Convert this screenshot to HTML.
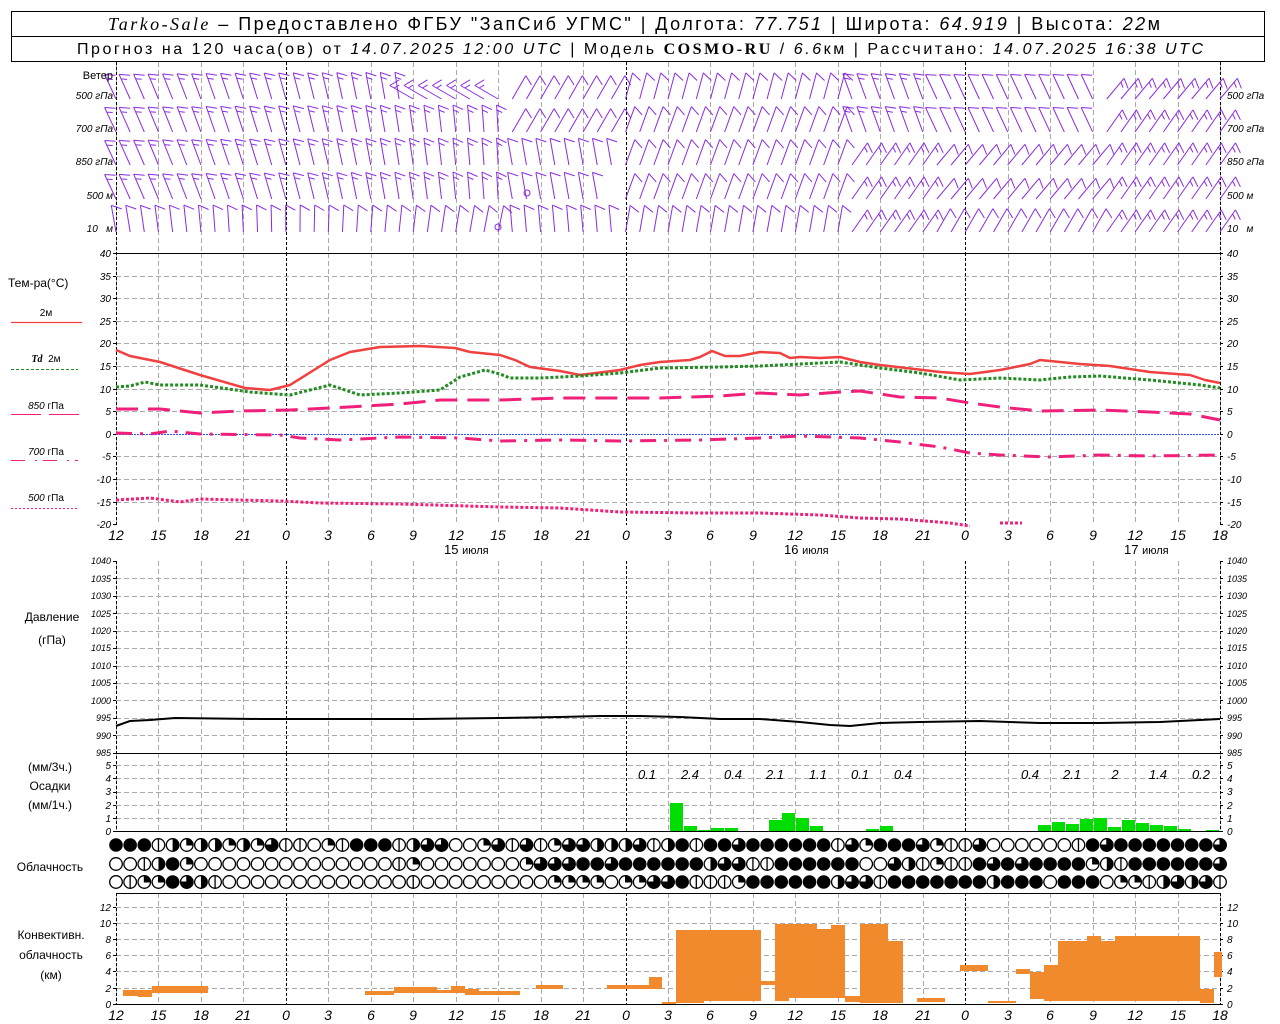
<!DOCTYPE html>
<html><head><meta charset="utf-8"><style>
html,body{margin:0;padding:0;background:#fff;width:1280px;height:1024px;overflow:hidden}
svg{display:block}
text{font-family:"Liberation Sans","DejaVu Sans",sans-serif;fill:#000}
.n{font-size:10px;font-style:italic}
.t{font-size:14px;font-style:italic}
.l{font-size:12px}
</style></head><body>
<svg id="s" width="1280" height="1024" xmlns="http://www.w3.org/2000/svg">
<g id="grid"></g>
<g id="data"></g>
<!-- header -->
<rect x="11.5" y="11.5" width="1253" height="50" fill="none" stroke="#000"/>
<line x1="11" y1="36.5" x2="1265" y2="36.5" stroke="#000"/>
<text x="108" y="30" style="font-size:18px" textLength="1052" lengthAdjust="spacing"><tspan font-family="Liberation Serif" font-style="italic">Tarko-Sale</tspan> – Предоставлено ФГБУ "ЗапСиб УГМС" | Долгота: <tspan font-style="italic">77.751</tspan> | Широта: <tspan font-style="italic">64.919</tspan> | Высота: <tspan font-style="italic">22</tspan>м</text>
<text x="77" y="54" style="font-size:16px" textLength="1126" lengthAdjust="spacing">Прогноз на 120 часа(ов) от <tspan font-style="italic">14.07.2025 12:00 UTC</tspan> | Модель <tspan font-family="Liberation Serif" font-weight="bold">COSMO-RU</tspan> / <tspan font-style="italic">6.6</tspan>км | Рассчитано: <tspan font-style="italic">14.07.2025 16:38 UTC</tspan></text>
<!-- wind labels -->
<g class="n" text-anchor="end">
<text x="113" y="79" style="font-size:11px;font-style:normal">Ветер</text>
<text x="113" y="99">500 гПа</text><text x="113" y="132">700 гПа</text><text x="113" y="165">850 гПа</text><text x="113" y="199">500 м</text><text x="113" y="232">10 &#160; м</text>
</g>
<g class="n">
<text x="1227" y="99">500 гПа</text><text x="1227" y="132">700 гПа</text><text x="1227" y="165">850 гПа</text><text x="1227" y="199">500 м</text><text x="1227" y="232">10 &#160; м</text>
</g>
<!-- temp axis labels -->
<g class="n" text-anchor="end">
<text x="111" y="257">40</text><text x="111" y="280">35</text><text x="111" y="302">30</text><text x="111" y="325">25</text><text x="111" y="347">20</text><text x="111" y="370">15</text><text x="111" y="393">10</text><text x="111" y="415">5</text><text x="111" y="438">0</text><text x="111" y="460">-5</text><text x="111" y="483">-10</text><text x="111" y="506">-15</text><text x="111" y="528">-20</text>
</g>
<g class="n">
<text x="1227" y="257">40</text><text x="1227" y="280">35</text><text x="1227" y="302">30</text><text x="1227" y="325">25</text><text x="1227" y="347">20</text><text x="1227" y="370">15</text><text x="1227" y="393">10</text><text x="1227" y="415">5</text><text x="1227" y="438">0</text><text x="1227" y="460">-5</text><text x="1227" y="483">-10</text><text x="1227" y="506">-15</text><text x="1227" y="528">-20</text>
</g>
<!-- temp legend -->
<text x="8" y="287" class="l">Тем-ра(°С)</text>
<text x="46" y="316" class="n" text-anchor="middle" style="font-style:normal">2м</text>
<line x1="11" y1="322.5" x2="82" y2="322.5" stroke="#f04040" stroke-width="1.2"/>
<text x="46" y="362" class="n" text-anchor="middle"><tspan font-weight="bold" font-family="Liberation Serif">Td</tspan> &#160;<tspan font-style="normal">2м</tspan></text>
<line x1="11" y1="369.5" x2="78" y2="369.5" stroke="#228b22" stroke-dasharray="3,2"/>
<text x="46" y="409" class="n" text-anchor="middle">850 <tspan font-style="normal">гПа</tspan></text>
<line x1="11" y1="414.5" x2="82" y2="414.5" stroke="#f0207a" stroke-dasharray="30,8"/>
<text x="46" y="455" class="n" text-anchor="middle">700 <tspan font-style="normal">гПа</tspan></text>
<line x1="11" y1="460.5" x2="78" y2="460.5" stroke="#f0207a" stroke-dasharray="14,10,2,6"/>
<text x="46" y="501" class="n" text-anchor="middle">500 <tspan font-style="normal">гПа</tspan></text>
<line x1="11" y1="508.5" x2="78" y2="508.5" stroke="#f0207a" stroke-dasharray="2,2"/>
<!-- time labels -->
<g class="t" text-anchor="middle">
<text x="116" y="540">12</text><text x="158.5" y="540">15</text><text x="201" y="540">18</text><text x="243" y="540">21</text><text x="286" y="540">0</text><text x="328" y="540">3</text><text x="371" y="540">6</text><text x="413" y="540">9</text><text x="456" y="540">12</text><text x="498" y="540">15</text><text x="541" y="540">18</text><text x="583" y="540">21</text><text x="626" y="540">0</text><text x="668" y="540">3</text><text x="710" y="540">6</text><text x="753" y="540">9</text><text x="795" y="540">12</text><text x="838" y="540">15</text><text x="880" y="540">18</text><text x="923" y="540">21</text><text x="965" y="540">0</text><text x="1008" y="540">3</text><text x="1050" y="540">6</text><text x="1093" y="540">9</text><text x="1135" y="540">12</text><text x="1178" y="540">15</text><text x="1220" y="540">18</text>
</g>
<g class="l">
<text x="444" y="554" style="font-size:13px">15 <tspan style="font-size:11px">июля</tspan></text>
<text x="784" y="554" style="font-size:13px">16 <tspan style="font-size:11px">июля</tspan></text>
<text x="1124" y="554" style="font-size:13px">17 <tspan style="font-size:11px">июля</tspan></text>
</g>
<!-- pressure -->
<g class="n" text-anchor="end" style="font-size:9px">
<text x="111" y="564">1040</text><text x="111" y="582">1035</text><text x="111" y="599">1030</text><text x="111" y="617">1025</text><text x="111" y="634">1020</text><text x="111" y="651">1015</text><text x="111" y="669">1010</text><text x="111" y="686">1005</text><text x="111" y="704">1000</text><text x="111" y="721">995</text><text x="111" y="739">990</text><text x="111" y="756">985</text>
</g>
<g class="n" style="font-size:9px">
<text x="1227" y="564">1040</text><text x="1227" y="582">1035</text><text x="1227" y="599">1030</text><text x="1227" y="617">1025</text><text x="1227" y="634">1020</text><text x="1227" y="651">1015</text><text x="1227" y="669">1010</text><text x="1227" y="686">1005</text><text x="1227" y="704">1000</text><text x="1227" y="721">995</text><text x="1227" y="739">990</text><text x="1227" y="756">985</text>
</g>
<text x="52" y="621" class="l" text-anchor="middle">Давление</text>
<text x="52" y="644" class="l" text-anchor="middle">(гПа)</text>
<!-- precip -->
<g class="n" text-anchor="end">
<text x="111" y="769">5</text><text x="111" y="782">4</text><text x="111" y="795">3</text><text x="111" y="809">2</text><text x="111" y="822">1</text><text x="111" y="835">0</text>
</g>
<g class="n">
<text x="1227" y="769">5</text><text x="1227" y="782">4</text><text x="1227" y="795">3</text><text x="1227" y="809">2</text><text x="1227" y="822">1</text><text x="1227" y="835">0</text>
</g>
<g class="l" text-anchor="middle">
<text x="50" y="771">(мм/3ч.)</text><text x="50" y="790">Осадки</text><text x="50" y="809">(мм/1ч.)</text>
<text x="50" y="871">Облачность</text>
<text x="51" y="939">Конвективн.</text><text x="51" y="959">облачность</text><text x="51" y="979">(км)</text>
</g>
<g class="t" text-anchor="middle" style="font-size:13px">
<text x="647" y="779">0.1</text><text x="690" y="779">2.4</text><text x="733" y="779">0.4</text><text x="775" y="779">2.1</text><text x="818" y="779">1.1</text><text x="860" y="779">0.1</text><text x="903" y="779">0.4</text><text x="1030" y="779">0.4</text><text x="1072" y="779">2.1</text><text x="1115" y="779">2</text><text x="1158" y="779">1.4</text><text x="1201" y="779">0.2</text>
</g>
<!-- conv -->
<g class="n" text-anchor="end">
<text x="111" y="911">12</text><text x="111" y="927">10</text><text x="111" y="943">8</text><text x="111" y="959">6</text><text x="111" y="975">4</text><text x="111" y="992">2</text><text x="111" y="1008">0</text>
</g>
<g class="n">
<text x="1227" y="911">12</text><text x="1227" y="927">10</text><text x="1227" y="943">8</text><text x="1227" y="959">6</text><text x="1227" y="975">4</text><text x="1227" y="992">2</text><text x="1227" y="1008">0</text>
</g>
<g class="t" text-anchor="middle">
<text x="116" y="1020">12</text><text x="158.5" y="1020">15</text><text x="201" y="1020">18</text><text x="243" y="1020">21</text><text x="286" y="1020">0</text><text x="328" y="1020">3</text><text x="371" y="1020">6</text><text x="413" y="1020">9</text><text x="456" y="1020">12</text><text x="498" y="1020">15</text><text x="541" y="1020">18</text><text x="583" y="1020">21</text><text x="626" y="1020">0</text><text x="668" y="1020">3</text><text x="710" y="1020">6</text><text x="753" y="1020">9</text><text x="795" y="1020">12</text><text x="838" y="1020">15</text><text x="880" y="1020">18</text><text x="923" y="1020">21</text><text x="965" y="1020">0</text><text x="1008" y="1020">3</text><text x="1050" y="1020">6</text><text x="1093" y="1020">9</text><text x="1135" y="1020">12</text><text x="1178" y="1020">15</text><text x="1220" y="1020">18</text>
</g>
</svg>
<script>
(function(){
var NS="http://www.w3.org/2000/svg",G=document.getElementById('grid'),D=document.getElementById('data');
function el(p,t,a){var e=document.createElementNS(NS,t);for(var k in a)e.setAttribute(k,a[k]);p.appendChild(e);return e;}
function X(h){return 116+h*1104/78;}
var L=116,R=1220;
function hg(ys){ys.forEach(function(y){el(G,'line',{x1:L,x2:R,y1:y+.5,y2:y+.5,stroke:'#aaa','stroke-dasharray':'5,3'});});}
hg([276,298,321,343,366,389,411,456,479,502]);
hg([578,596,613,631,648,666,683,700,718,735]);
hg([765,778,792,805,818]);
hg([907,923,939,955,971,988]);
for(var k=0;k<=26;k++){var x=Math.round(X(3*k))+.5,zero=(k%8==4);
 [[62,253],[253,525],[561,753],[753,831],[893,1004]].forEach(function(s){
  el(G,'line',{x1:x,x2:x,y1:s[0],y2:s[1],stroke:zero?'#000':'#aaa','stroke-dasharray':zero?'3,2':'5,3'});});}
[[L,62,L,525],[R,62,R,525],[L,561,L,831],[R,561,R,831],[L,893,L,1004],[R,893,R,1004]].forEach(function(a){el(G,'line',{x1:a[0]+.5,y1:a[1],x2:a[2]+.5,y2:a[3],stroke:'#000','stroke-dasharray':'3,2'});});
[253,753,831,893,1004].forEach(function(y){el(G,'line',{x1:L,x2:R,y1:y+.5,y2:y+.5,stroke:'#000'});});
el(G,'line',{x1:L,x2:R,y1:434.5,y2:434.5,stroke:'#3050ff','stroke-dasharray':'2,1'});
function ticks(ys){ys.forEach(function(y){el(G,'line',{x1:L-3,x2:L,y1:y+.5,y2:y+.5,stroke:'#000'});el(G,'line',{x1:R,x2:R+3,y1:y+.5,y2:y+.5,stroke:'#000'});});}
ticks([253,276,298,321,343,366,389,411,434,456,479,502,524,561,578,596,613,631,648,666,683,700,718,735,753,765,778,792,805,818,831,907,923,939,955,971,988,1004]);
var rows=[95,128,161,195,228],C='#8a2be2';
function barb(x,y,ang,n){var r=ang*Math.PI/180,len=27,tx=x+len*Math.sin(r),ty=y-len*Math.cos(r);
 var d='M'+x+' '+y+'L'+tx.toFixed(1)+' '+ty.toFixed(1);
 for(var i=0;i<n;i++){var px=x+(len-i*5)*Math.sin(r),py=y-(len-i*5)*Math.cos(r),fl=(i==n-1&&n>1)?6:11;
  d+='M'+px.toFixed(1)+' '+py.toFixed(1)+'l'+(fl*Math.cos(r+0.5)).toFixed(1)+' '+(fl*Math.sin(r+0.5)).toFixed(1);}
 el(D,'path',{d:d,stroke:C,fill:'none','stroke-width':1});}
for(var i=0;i<=78;i++){var x=X(i);
 for(var r=0;r<5;r++){var y=rows[r]+4,ang,n=2;
  if(i<28){ang=-25+i*0.8+(r==4?15:0);n=(r==4)?1:2;if(i>20&&r==0)ang=-60;}
  else if(i<36){ang=(r<2)?30:(r==4?-5:-10);n=1;if(r==3&&i==35)continue;}
  else if(i<52){ang=(r==0)?15:(r==4?10:20);n=1;}
  else if(i<58){ang=(r<2)?-20:35;n=2;}
  else if(i<70){ang=(r<2)?-25:40;n=1;if(r==4)ang=30;}
  else {ang=(r<1)?40:35;n=2;}
  barb(x,y,ang,n);}
}
el(D,'circle',{cx:527,cy:193,r:3,fill:'none',stroke:C});el(D,'circle',{cx:498,cy:227,r:3,fill:'none',stroke:C});
function pl(pts,col,w,da){el(D,'polyline',{points:pts,fill:'none',stroke:col,'stroke-width':w,'stroke-dasharray':da||'none','stroke-linejoin':'round'});}
pl('116,350 130,356 160,362 200,375 245,388 270,390 290,385 330,360 350,352 380,347 420,346 455,348 470,352 500,355 515,360 530,367 560,371 580,375 620,370 640,365 660,362 690,360 700,357 712,351 725,356 740,356 760,352 780,353 790,358 800,357 820,358 840,357 860,362 880,365 940,372 970,374 1000,370 1030,364 1040,360 1080,364 1110,366 1150,372 1190,375 1205,380 1220,383','#f04040',2.5);
pl('116,387 130,386 145,382 160,385 200,385 250,392 290,395 310,390 330,385 345,390 360,395 400,393 440,390 460,377 485,370 500,374 510,378 540,378 580,376 620,373 660,368 720,367 760,366 800,364 840,362 880,368 920,373 960,380 1000,378 1040,380 1070,377 1100,376 1150,380 1200,385 1220,388','#228b22',3,'3,2');
pl('116,409 160,409 200,413 240,411 290,410 330,408 400,404 440,400 500,400 560,398 620,398 660,398 720,396 760,393 800,395 840,392 860,391 900,397 940,398 970,403 1000,407 1040,411 1100,410 1150,412 1190,414 1220,420','#f0207a',3,'22,10');
pl('116,433 150,434 170,431 200,434 280,435 300,438 340,440 400,437 460,438 500,441 560,440 620,441 700,440 760,438 800,436 860,438 900,442 940,447 970,453 1000,455 1050,457 1100,455 1150,456 1220,455','#f0207a',3,'16,8,3,8');
pl('116,500 150,498 180,502 200,499 280,501 320,503 400,504 500,507 560,508 620,512 700,513 760,513 820,515 860,518 900,519 950,523 970,526','#f0207a',3,'3,2');
pl('1000,523 1022,523','#f0207a',3,'3,2');
pl('116,726 130,721 150,720 175,718 260,719 420,719 500,718 560,717 600,716 640,716 680,717 720,719 760,719 800,722 830,725 850,726 880,723 920,722 980,721 1040,723 1100,723 1160,722 1200,720 1220,719','#000',2);
var pb=[[670,803],[684,826],[698,830],[711,828],[725,828],[769,820],[782,813],[796,818],[810,826],[866,829],[880,826],[1038,825],[1052,822],[1066,824],[1080,819],[1094,818],[1108,827],[1122,820],[1136,823],[1150,825],[1164,826],[1178,829],[1206,830]];
pb.forEach(function(b){el(D,'rect',{x:b[0],y:b[1],width:13,height:831-b[1],fill:'#00dd00'});});
var cb=[[123,138,990,996],[138,152,990,997],[152,166,986,993],[166,194,986,993],[194,208,986,993],[365,394,991,995],[394,437,987,993],[437,451,990,993],[451,465,986,993],[465,479,989,995],[479,520,991,995],[536,563,985,989],[607,649,985,989],[649,662,977,989],[662,676,1002,1004],[676,704,930,1003],[704,761,930,1001],[761,775,981,985],[775,789,924,1001],[789,817,924,998],[817,831,929,998],[831,845,925,998],[845,860,996,1002],[860,888,924,1003],[888,903,941,1003],[917,945,998,1002],[960,988,965,971],[988,1016,1001,1003],[1016,1030,969,974],[1030,1044,972,999],[1044,1058,965,1001],[1058,1087,941,1001],[1087,1101,936,1001],[1101,1115,941,1001],[1115,1200,936,1001],[1200,1214,989,1003],[1214,1222,952,977]];
cb.forEach(function(b){el(D,'rect',{x:b[0],y:b[2],width:b[1]-b[0],height:b[3]-b[2],fill:'#f08a2c'});});
var rowsC=[
'FFFVHQHHQHQTVVEQVFFFVHTTEEQTVTVQTTHHHTVHFVFFTFFFFFFVTQFFFTQVVTEEEEEEVFTFFFFFFFT',
'EEVHFQEEEEEEEEEEEEEEVQEEEEEEEQTTTFFTFFFFFFHTTVVFFFFFFEETHVQVVFTFTFFFFQHVFFFFFFTV',
'EVQQFTHVEEEEEEEEEEEEEVEEEEEEEEEQQQQEQQTTFVVVQFFFFFFHTTVFFFFFFFHFFFEFFFEQQVHTHTVFF'];
var cy=[845,864,882];
rowsC.forEach(function(s,ri){for(var i=0;i<=78;i++){var c=s[i]||'E',x=X(i),y=cy[ri],rr=6.3;
 if(c=='F'){el(D,'circle',{cx:x,cy:y,r:rr+0.5,fill:'#000'});continue;}
 el(D,'circle',{cx:x,cy:y,r:rr,fill:'#fff',stroke:'#000','stroke-width':1.3});
 if(c=='V')el(D,'line',{x1:x,x2:x,y1:y-rr,y2:y+rr,stroke:'#000','stroke-width':1.3});
 if(c=='H')el(D,'path',{d:'M'+x+' '+(y-rr)+'A'+rr+' '+rr+' 0 0 1 '+x+' '+(y+rr)+'Z',fill:'#000'});
 if(c=='Q')el(D,'path',{d:'M'+x+' '+y+'L'+x+' '+(y-rr)+'A'+rr+' '+rr+' 0 0 1 '+(x+rr)+' '+y+'Z',fill:'#000',stroke:'#000'});
 if(c=='T')el(D,'path',{d:'M'+x+' '+y+'L'+x+' '+(y-rr)+'A'+rr+' '+rr+' 0 1 1 '+(x-rr)+' '+y+'Z',fill:'#000',stroke:'#000'});
}});
})();
</script>
</body></html>
